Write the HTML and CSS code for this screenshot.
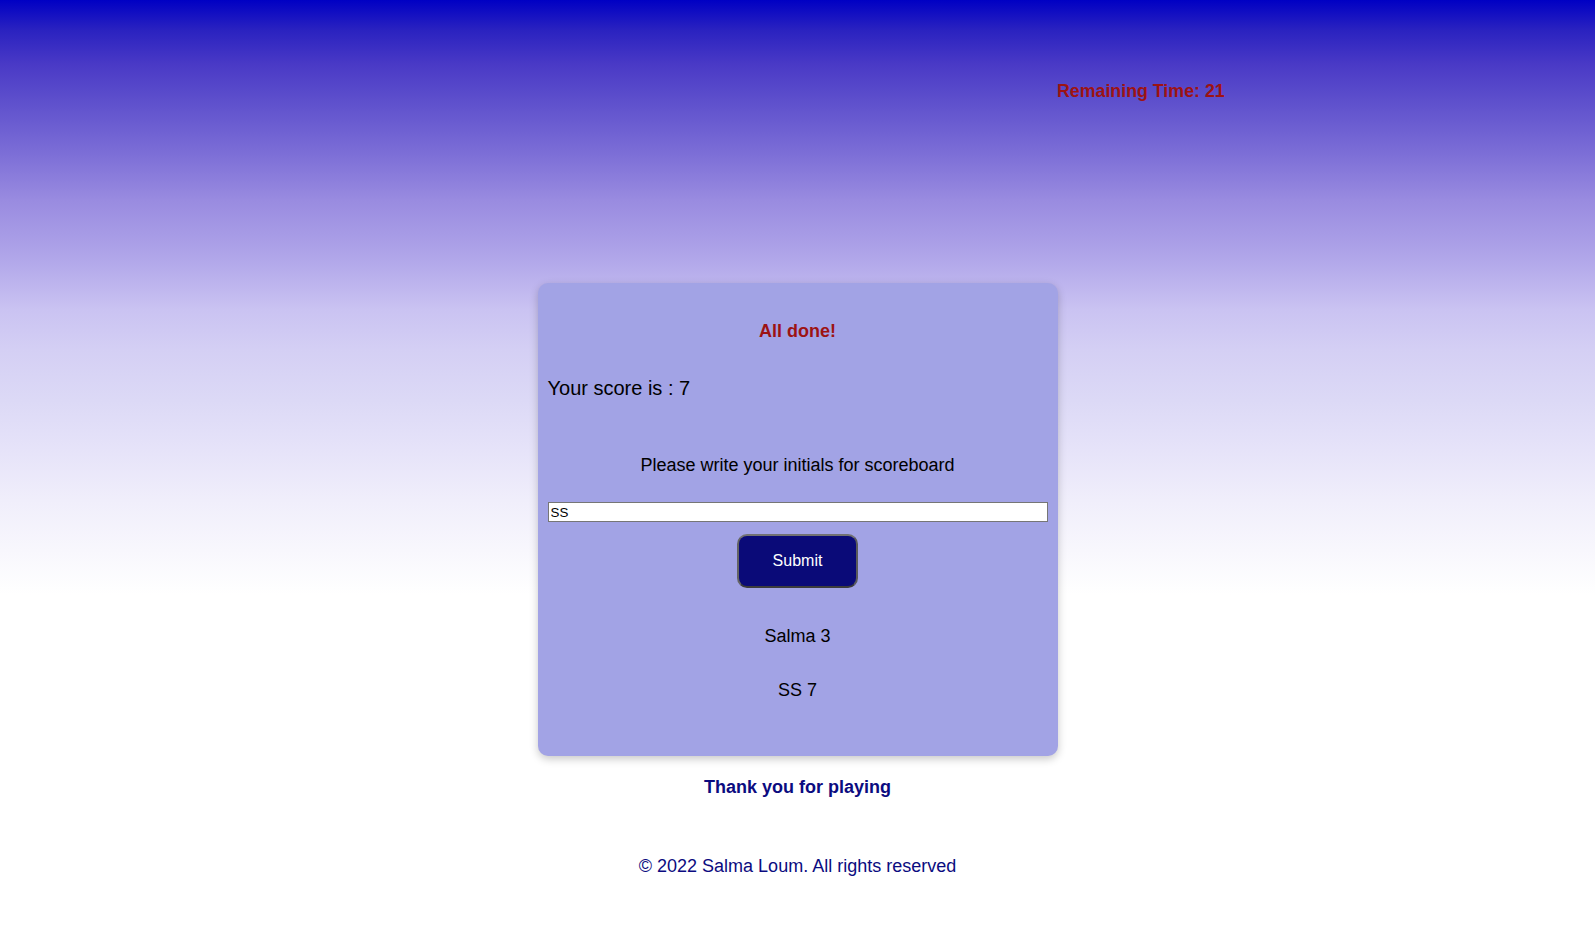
FILE: index.html
```html
<!DOCTYPE html>
<html lang="en">
<head>
<meta charset="utf-8">
<title>Quiz</title>
<link rel="stylesheet" href="styles.css">
</head>
<body>
<header class="top-bar">
  <p class="timer">Remaining Time: 21</p>
</header>
<main class="card">
  <h2 class="card-title">All done!</h2>
  <p class="score">Your score is : 7</p>
  <p class="prompt">Please write your initials for scoreboard</p>
  <input class="initials" type="text" value="SS">
  <div class="btn-row"><button class="submit-btn" type="button">Submit</button></div>
  <p class="entry entry-first">Salma 3</p>
  <p class="entry entry-next">SS 7</p>
</main>
<p class="thanks">Thank you for playing</p>
<footer class="footer">
  <p class="copyright">© 2022 Salma Loum. All rights reserved</p>
</footer>
</body>
</html>
```
FILE: styles.css
```css
html {
  background: #ffffff;
}
body {
  margin: 0;
  min-height: 100vh;
  font-family: "Liberation Sans", Arial, Helvetica, sans-serif;
  font-size: 18px;
  color: #000;
  background: linear-gradient(to bottom,
    #0000c4 0px,
    #2a22c0 30px,
    #4a3ac6 65px,
    #5d4fcc 100px,
    #7a6cd6 150px,
    #998be0 200px,
    #ada2e8 250px,
    #bbb2ed 280px,
    #cac3f2 310px,
    #d4cff4 350px,
    #dcd9f6 400px,
    #e6e3f9 450px,
    #f0eefb 500px,
    #f8f7fd 550px,
    #ffffff 595px) top left / 100% 595px no-repeat;
}
p, h2 {
  margin: 0;
}
.top-bar {
  display: flex;
  padding: 81px 0 0 1057px;
}
.timer {
  font-size: 17.8px;
  font-weight: bold;
  line-height: 21px;
  color: #9d1313;
  white-space: nowrap;
}
.card {
  box-sizing: border-box;
  width: 520px;
  margin: 181px auto 0;
  padding: 10px 10px 55px;
  background: #a2a3e5;
  border-radius: 10px;
  box-shadow: 0 3px 9px rgba(0, 0, 0, 0.22);
  display: flex;
  flex-direction: column;
}
.card-title {
  margin-top: 27px;
  font-size: 18px;
  font-weight: bold;
  line-height: 22px;
  color: #9d1313;
  text-align: center;
}
.score {
  margin-top: 35px;
  font-size: 20px;
  line-height: 22px;
}
.prompt {
  margin-top: 55px;
  line-height: 22px;
  text-align: center;
}
.initials {
  box-sizing: border-box;
  width: 100%;
  height: 20px;
  margin: 26px 0 0;
  padding: 1px 2px;
  border: 1px solid #767676;
  background: #fff;
  font-family: "Liberation Sans", Arial, sans-serif;
  font-size: 13.33px;
  color: #000;
}
.btn-row {
  display: flex;
  justify-content: center;
  margin-top: 12px;
}
.submit-btn {
  box-sizing: border-box;
  width: 121px;
  height: 54px;
  border: 2px solid;
  border-color: #727272 #5a5a5a #3c3c3c #646464;
  border-radius: 10px;
  background: #0a0a78;
  color: #ffffff;
  font-family: "Liberation Sans", Arial, sans-serif;
  font-size: 16px;
}
.entry {
  line-height: 22px;
  text-align: center;
}
.entry-first {
  margin-top: 37px;
}
.entry-next {
  margin-top: 32px;
}
.thanks {
  margin-top: 20px;
  font-weight: bold;
  line-height: 22px;
  text-align: center;
  color: #0b0b80;
}
.footer {
  margin-top: 57px;
}
.copyright {
  line-height: 22px;
  text-align: center;
  color: #0b0b80;
}
```
